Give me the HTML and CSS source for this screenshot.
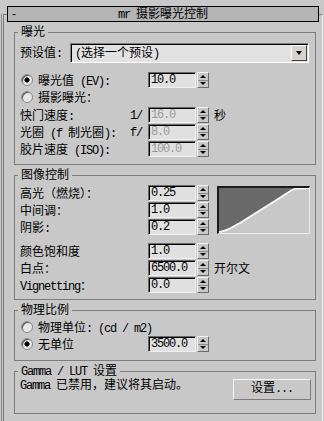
FILE: index.html
```html
<!DOCTYPE html>
<html>
<head>
<meta charset="utf-8">
<link rel="stylesheet" href="styles.css">
</head>
<body>
<div class="edge">
  <div class="rollout">
    <div class="titlebar"><span class="minus">-</span><span class="title"><span class="lat">mr </span>摄影曝光控制</span><span></span></div>

    <div class="group g1">
      <div class="legend">曝光</div>
      <div class="row preset">
        <span class="lbl w50">预设值<span class="lat">:</span></span>
        <div class="dropdown"><span class="ddtext"><span class="lat">(</span>选择一个预设<span class="lat">)</span></span><span class="ddbtn"></span></div>
      </div>
      <div class="row ev">
        <span class="radio on"></span><span class="lbl w110">曝光值<span class="lat"> (EV):</span></span>
        <span class="field">10.0</span><span class="spin"><i></i><i></i></span>
      </div>
      <div class="row tall">
        <span class="radio"></span><span class="lbl w110">摄影曝光：</span>
      </div>
      <div class="row">
        <span class="lbl w110">快门速度<span class="lat">:</span></span><span class="pre lat">1/</span>
        <span class="field dis">16.0</span><span class="spin"><i></i><i></i></span><span class="unit">秒</span>
      </div>
      <div class="row">
        <span class="lbl w110">光圈<span class="lat"> (f </span>制光圈<span class="lat">):</span></span><span class="pre lat">f/</span>
        <span class="field dis">8.0</span><span class="spin"><i></i><i></i></span>
      </div>
      <div class="row">
        <span class="lbl">胶片速度<span class="lat"> (ISO):</span></span>
        <span class="field dis">100.0</span><span class="spin"><i></i><i></i></span>
      </div>
    </div>

    <div class="group g2">
      <div class="legend">图像控制</div>
      <div class="ictop">
        <div class="col">
          <div class="row">
            <span class="lbl">高光（燃烧）：</span>
            <span class="field">0.25</span><span class="spin"><i></i><i></i></span>
          </div>
          <div class="row">
            <span class="lbl">中间调：</span>
            <span class="field">1.0</span><span class="spin"><i></i><i></i></span>
          </div>
          <div class="row">
            <span class="lbl">阴影<span class="lat">:</span></span>
            <span class="field">0.2</span><span class="spin"><i></i><i></i></span>
          </div>
        </div>
        <div class="graph">
          <svg width="90" height="45" viewBox="0 0 90 45">
            <path d="M0 0 L0 44 L4 43 C10 41.5 15 38 21 35 L61 9.7 C67 6 72 2 76 0.8 L90 0.3 L90 0 Z" fill="#6a6a6a"/>
            <path d="M0 44 L4 43 C10 41.5 15 38 21 35 L61 9.7 C67 6 72 2 76 0.8 L90 0.3" fill="none" stroke="#ffffff" stroke-width="1.6"/>
          </svg>
        </div>
      </div>
      <div class="row sat">
        <span class="lbl">颜色饱和度</span>
        <span class="field">1.0</span><span class="spin"><i></i><i></i></span>
      </div>
      <div class="row">
        <span class="lbl">白点：</span>
        <span class="field">6500.0</span><span class="spin"><i></i><i></i></span><span class="unit">开尔文</span>
      </div>
      <div class="row">
        <span class="lbl"><span class="lat">Vignetting</span>：</span>
        <span class="field">0.0</span><span class="spin"><i></i><i></i></span>
      </div>
    </div>

    <div class="group g3">
      <div class="legend">物理比例</div>
      <div class="row first">
        <span class="radio"></span><span class="lbl free">物理单位<span class="lat">: (cd / m2)</span></span>
      </div>
      <div class="row">
        <span class="radio on"></span><span class="lbl w110">无单位</span>
        <span class="field">3500.0</span><span class="spin"><i></i><i></i></span>
      </div>
    </div>

    <div class="group g4">
      <div class="legend"><span class="lat">Gamma / LUT </span>设置</div>
      <div class="gamma">
        <span class="gtext"><span class="lat">Gamma </span>已禁用，建议将其启动。</span>
        <span class="btn">设置<span class="lat">...</span></span>
      </div>
    </div>
  </div>
</div>
</body>
</html>
```

FILE: styles.css
```css
* { box-sizing: border-box; }
html, body { margin: 0; padding: 0; }
body {
  width: 324px;
  height: 421px;
  overflow: hidden;
  background: #c8c8c8;
  color: #000;
  font-family: "Liberation Sans", "Noto Sans CJK SC", sans-serif;
  font-size: 12px;
  line-height: 16px;
}
.lat {
  font-family: "Liberation Mono", monospace;
  font-size: 12px;
  letter-spacing: -1.2px;
}
.edge {
  margin: 14px 0 0 1px;
  border-left: 1px solid #8a8a8a;
  height: 407px;
}
.rollout {
  margin-left: 1px;
  width: 320px;
  height: 407px;
  border: 1px solid #7a7a7a;
  border-bottom: 0;
  border-right-color: #f2f2f2;
}
.titlebar {
  margin: -9px 0 0 3px;
  width: 312px;
  height: 16px;
  border: 1px solid #000;
  background: #b4b4b4;
  display: grid;
  grid-template-columns: 1fr auto 1fr;
  line-height: 14px;
}
.minus { padding-left: 4px; }
.title { white-space: nowrap; }

.group {
  margin: 10px 0 0 10px;
  width: 302px;
  border: 1px solid #7d7d7d;
  padding: 0 5px;
}
.legend {
  width: max-content;
  height: 14px;
  line-height: 14px;
  margin: -8px 0 0 -2px;
  padding: 0 3px;
  background: #c8c8c8;
  white-space: nowrap;
}
.row {
  display: flex;
  align-items: flex-start;
  height: 17px;
}
.lbl, .pre, .unit { padding-top: 1px; }
.lbl { width: 128px; flex: none; white-space: nowrap; }
.w110 { width: 110px; }
.w50 { width: 50px; }
.free { width: auto; }
.pre { width: 18px; flex: none; }
.unit { margin-left: 5px; white-space: nowrap; }

.radio {
  flex: none;
  width: 12px;
  height: 12px;
  margin: 2px 5px 0 1px;
  border-radius: 50%;
  border: 1px solid #8a8a8a;
  background: #e6e6e6;
  box-shadow: inset 1px 1px 0 #555;
}
.radio.on {
  background: radial-gradient(circle, #000 0 2.2px, #e6e6e6 2.9px);
}

.field {
  flex: none;
  width: 48px;
  height: 16px;
  border: 1px solid;
  border-color: #6a6a6a #f0f0f0 #f0f0f0 #6a6a6a;
  box-shadow: inset 1px 1px 0 #000;
  background: #e0e0e0;
  padding-left: 2px;
  line-height: 14px;
  font-family: "Liberation Mono", monospace;
  font-size: 12px;
  letter-spacing: -1.2px;
  white-space: nowrap;
  overflow: hidden;
}
.field.dis { color: #9a9a9a; }

.spin {
  flex: none;
  width: 12px;
  height: 16px;
  margin-left: 1px;
  display: flex;
  flex-direction: column;
  border: 1px solid;
  border-color: #f4f4f4 #6a6a6a #6a6a6a #f4f4f4;
  background: #c8c8c8;
}
.spin i {
  flex: 1;
  display: flex;
  align-items: center;
  justify-content: center;
}
.spin i::before {
  content: "";
  border-left: 3px solid transparent;
  border-right: 3px solid transparent;
  border-bottom: 3px solid #000;
}
.spin i + i { border-top: 1px solid #8a8a8a; }
.spin i + i::before {
  border-bottom: 0;
  border-top: 3px solid #000;
}

/* group 1 */
.g1 { padding-bottom: 6px; }
.preset { height: 20px; margin-top: 4px; }
.preset .lbl { line-height: 20px; padding-top: 0; }
.dropdown {
  width: 239px;
  height: 20px;
  display: flex;
  align-items: center;
  justify-content: space-between;
  background: #e2e2e2;
  border: 1px solid;
  border-color: #808080 #fff #fff #808080;
  box-shadow: inset 1px 1px 0 #000;
  padding: 0 1px 0 4px;
  white-space: nowrap;
}
.ddbtn {
  width: 16px;
  height: 16px;
  background: #d6d3cc;
  border: 1px solid;
  border-color: #fff #404040 #404040 #fff;
  display: flex;
  align-items: center;
  justify-content: center;
}
.ddbtn::before {
  content: "";
  border-left: 3.5px solid transparent;
  border-right: 3.5px solid transparent;
  border-top: 4px solid #000;
}
.ev { margin-top: 9px; }
.tall { height: 18px; }

/* group 2 */
.g2 { padding-bottom: 5px; }
.ictop { display: flex; margin-top: 3px; }
.col { width: 189px; flex: none; }
.graph {
  margin: 1px 0 0 8px;
  width: 93px;
  height: 48px;
  border-style: solid;
  border-width: 2px 1px 1px 2px;
  border-color: #1c1c1c #ececec #ececec #1c1c1c;
  overflow: hidden;
}
.graph svg { display: block; }
.sat { margin-top: 7px; }

/* group 3 */
.g3 { padding-bottom: 7px; }
.g3 .first { margin-top: 2px; }

/* group 4 */
.g4 { padding-bottom: 13px; }
.gamma {
  display: flex;
  align-items: flex-start;
  margin-top: 1px;
  height: 21px;
}
.gtext { white-space: nowrap; line-height: 14px; margin-top: -1px; }
.btn {
  margin-left: auto;
  margin-right: -1px;
  width: 78px;
  height: 21px;
  border: 1px solid;
  border-color: #f4f4f4 #7a7a7a #7a7a7a #f4f4f4;
  text-align: center;
  line-height: 17px;
  white-space: nowrap;
}
```
